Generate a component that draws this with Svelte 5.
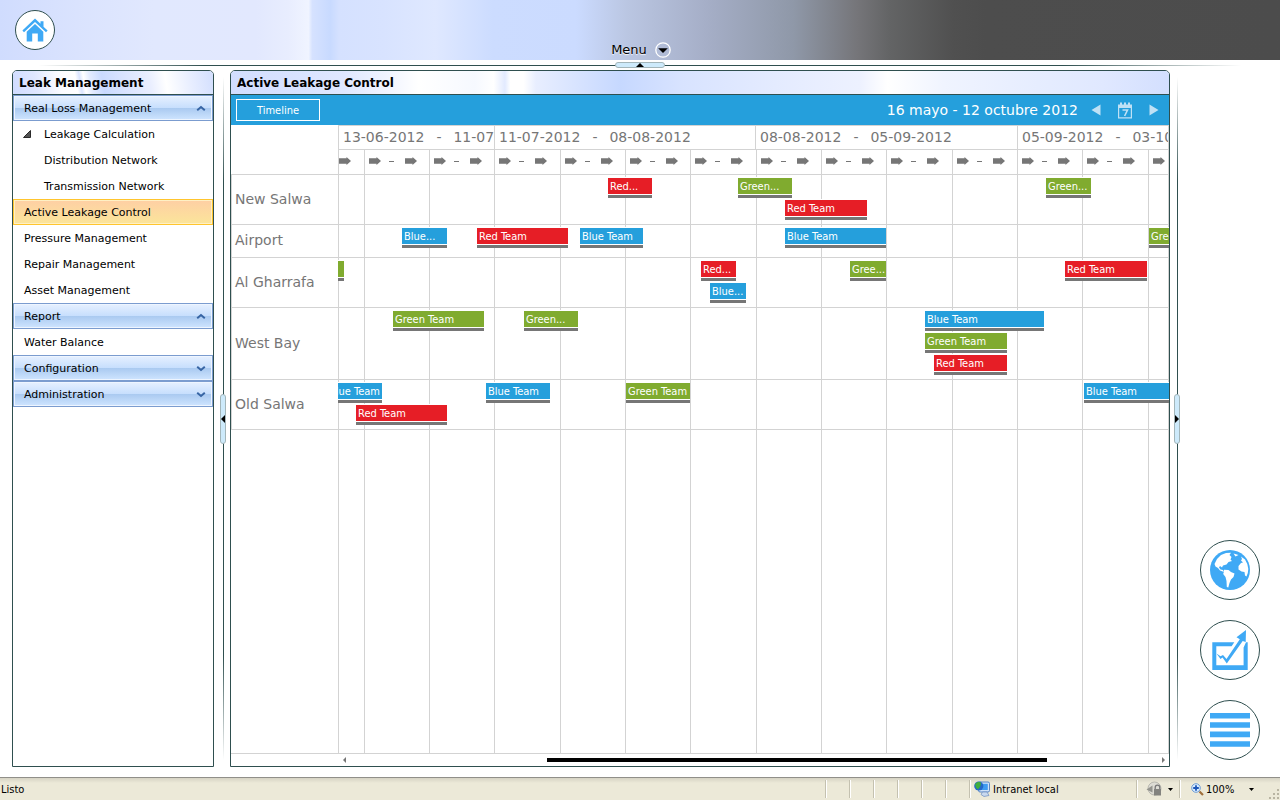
<script>
  const TRACK = 831;
  const pct = (v) => `${(v / TRACK) * 100}%`;
  const columns = (list) => list.map((v) => `minmax(0, ${v}fr)`).join(' ');

  const menu = [
    { label: 'Real Loss Management', kind: 'group', open: true },
    { label: 'Leakage Calculation', kind: 'parent' },
    { label: 'Distribution Network', kind: 'child' },
    { label: 'Transmission Network', kind: 'child' },
    { label: 'Active Leakage Control', kind: 'item', active: true },
    { label: 'Pressure Management', kind: 'item' },
    { label: 'Repair Management', kind: 'item' },
    { label: 'Asset Management', kind: 'item' },
    { label: 'Report', kind: 'group', open: true },
    { label: 'Water Balance', kind: 'item' },
    { label: 'Configuration', kind: 'group', open: false },
    { label: 'Administration', kind: 'group', open: false }
  ];

  const months = [
    { from: '13-06-2012', to: '11-07-2012', span: 156 },
    { from: '11-07-2012', to: '08-08-2012', span: 261 },
    { from: '08-08-2012', to: '05-09-2012', span: 262 },
    { from: '05-09-2012', to: '03-10-2012', span: 152 }
  ];
  const weeks = [26, 65, 65, 66, 65, 65, 66, 65, 65, 66, 65, 65, 66, 21];

  // Each lane lists its bars as [team, label, start, end].
  const rows = [
    { name: 'New Salwa', lanes: [
      [['red', 'Red...', 270, 314], ['green', 'Green...', 400, 454], ['green', 'Green...', 708, 753]],
      [['red', 'Red Team', 447, 529]]
    ] },
    { name: 'Airport', lanes: [
      [['blue', 'Blue...', 64, 109], ['red', 'Red Team', 139, 230], ['blue', 'Blue Team', 242, 305],
       ['blue', 'Blue Team', 447, 548], ['green', 'Green Team', 811, 880]]
    ] },
    { name: 'Al Gharrafa', lanes: [
      [['green', '', -20, 6], ['red', 'Red...', 363, 398], ['green', 'Gree...', 512, 548], ['red', 'Red Team', 727, 809]],
      [['blue', 'Blue...', 372, 408]]
    ] },
    { name: 'West Bay', lanes: [
      [['green', 'Green Team', 55, 146], ['green', 'Green...', 186, 240], ['blue', 'Blue Team', 587, 706]],
      [['green', 'Green Team', 587, 669]],
      [['red', 'Red Team', 596, 669]]
    ] },
    { name: 'Old Salwa', lanes: [
      [['blue', 'Blue Team', -11, 44], ['blue', 'Blue Team', 148, 212], ['green', 'Green Team', 288, 352], ['blue', 'Blue Team', 746, 860]],
      [['red', 'Red Team', 18, 109]]
    ] }
  ];
</script>

{#snippet arrow()}
  <svg class="arrow" width="12" height="8" viewBox="0 0 12 8" aria-hidden="true"><path d="M0 1.3H7.5V0L12 4L7.5 8V6.7H0Z" /></svg>
{/snippet}

<div class="app">
  <header class="banner">
    <button class="round home" aria-label="Home">
      <svg width="26" height="24" viewBox="0 0 26 24" aria-hidden="true">
        <path d="M13 0.5L18.5 5.8V3.2H21.5V8.7L25.6 12.6L24 14.3L13 3.9L2 14.3L0.4 12.6Z" />
        <path d="M13 6L21.3 13.8V23.5H15.8V15.5H10.2V23.5H4.7V13.8Z" />
      </svg>
    </button>
    <button class="menu">
      Menu
      <svg width="16" height="16" viewBox="0 0 16 16" aria-hidden="true">
        <circle cx="8" cy="8" r="7.2" fill="none" stroke="#fff" stroke-width="1.3" />
        <path d="M3.2 6.2H12.8L8 11Z" fill="#000" />
      </svg>
    </button>
  </header>

  <div class="divider">
    <button class="handle wide" aria-label="Collapse header">
      <svg width="8" height="4" viewBox="0 0 8 4" aria-hidden="true"><path d="M0 4L4 0L8 4Z" /></svg>
    </button>
  </div>

  <div class="work">
    <nav class="panel side" aria-label="Leak Management">
      <h2 class="title small-title">Leak Management</h2>
      <ul>
        {#each menu as m}
          <li>
            <button class="entry {m.kind}" class:active={m.active}>
              {#if m.kind === 'parent'}
                <svg class="twist" width="8" height="8" viewBox="0 0 8 8" aria-hidden="true"><path d="M7.5 0.5V7.5H0.5Z" fill="#555" stroke="#2a2a2a" /></svg>
              {/if}
              <span>{m.label}</span>
              {#if m.kind === 'group'}
                <svg class:down={!m.open} width="10" height="7" viewBox="0 0 10 7" aria-hidden="true"><path d="M1.2 5.2L5 2L8.8 5.2" fill="none" stroke="#3765a4" stroke-width="2" /></svg>
              {/if}
            </button>
          </li>
        {/each}
      </ul>
    </nav>

    <div class="splitter left">
      <button class="handle" aria-label="Collapse navigation">
        <svg width="4" height="8" viewBox="0 0 4 8" aria-hidden="true"><path d="M4 0L0 4L4 8Z" /></svg>
      </button>
    </div>

    <main class="panel">
      <h1 class="title">Active Leakage Control</h1>
      <div class="toolbar">
        <button class="view">Timeline</button>
        <span class="range">16 mayo - 12 octubre 2012</span>
        <button class="tool" aria-label="Previous"><svg width="10" height="12" viewBox="0 0 10 12"><path d="M9.5 0.5V11.5L0.5 6Z" /></svg></button>
        <button class="tool cal" aria-label="Pick date">
          <svg width="16" height="17" viewBox="0 0 16 17">
            <path fill-rule="evenodd" d="M1 2.5H3V0.5H5V2.5H7V0.5H9V2.5H11V0.5H13V2.5H15V16.5H1ZM2.2 6V15.3H13.8V6Z" />
            <path d="M5.5 8H10.5L7.6 14" fill="none" stroke="#bfe1f5" stroke-width="1.6" />
          </svg>
        </button>
        <button class="tool" aria-label="Next"><svg width="10" height="12" viewBox="0 0 10 12"><path d="M0.5 0.5V11.5L9.5 6Z" /></svg></button>
      </div>

      <div class="chart">
        <div class="scale">
          <div class="corner"></div>
          <div class="heads">
            <div class="months" style:grid-template-columns={columns(months.map((m) => m.span))}>
              {#each months as m}
                <div class="month"><span>{m.from}</span><span>-</span><span>{m.to}</span></div>
              {/each}
            </div>
            <div class="weeks" style:grid-template-columns={columns(weeks)}>
              {#each weeks as w, i}
                <div class="week" class:first={i === 0}>
                  {@render arrow()}<i></i>{@render arrow()}
                </div>
              {/each}
            </div>
          </div>
        </div>

        <div class="body">
          <div class="lines" aria-hidden="true" style:grid-template-columns={columns(weeks)}>
            {#each weeks as w}<div></div>{/each}
          </div>
          {#each rows as r}
            <section class="row" aria-label={r.name}>
              <div class="name">{r.name}</div>
              <div class="lanes">
                {#each r.lanes as lane}
                  <div class="lane">
                    {#each lane as [team, label, start, end]}
                      <div class="bar {team}" style:left={pct(start)} style:width={pct(end - start)}>{label}</div>
                    {/each}
                  </div>
                {/each}
              </div>
            </section>
          {/each}
        </div>

        <div class="scroll">
          <div class="rail">
            <svg width="3" height="6" viewBox="0 0 3 6" aria-hidden="true"><path d="M3 0V6L0 3Z" /></svg>
            <div class="groove"><div class="thumb"></div></div>
            <svg width="3" height="6" viewBox="0 0 3 6" aria-hidden="true"><path d="M0 0V6L3 3Z" /></svg>
          </div>
        </div>
      </div>
    </main>

    <div class="splitter">
      <button class="handle" aria-label="Collapse tools">
        <svg width="4" height="8" viewBox="0 0 4 8" aria-hidden="true"><path d="M0 0L4 4L0 8Z" /></svg>
      </button>
    </div>

    <aside class="tools">
      <button class="round big" aria-label="Map">
        <svg width="40" height="40" viewBox="0 0 40 40" aria-hidden="true">
          <circle cx="20" cy="20" r="20" />
          <path fill="#fff" d="M4.5 14L7 9L11 5L16 3L21 2.800L19.500 5L21.500 7L20.500 9.500L22 11L18.500 12L16.500 14.500L13 15.500L12 17.500L10 16L9 17.500L10.500 19.500L13 20L14 22L10 20.500L8 18L5.500 16.500Z" />
          <path fill="#fff" d="M14 19.700L18.500 20L21 22L24.500 23.500L23.500 27L21 29.500L19.500 33L18.300 37.500L16.800 37L16.500 31L15.500 27L13.200 24L14 21.500Z" />
          <path fill="#fff" d="M23.500 3.500L28.500 5L25.500 6.500Z" />
          <path fill="#fff" d="M31 6.500L35 9.500L37.300 14L38.300 19L37.800 23L36.500 26.500L35 25.500L34.500 22L31.500 21.500L28.500 19.500L28.500 16L31 13L33 12.500L31 10.500L32 9Z" />
        </svg>
      </button>
      <button class="round big" aria-label="Report">
        <svg width="40" height="40" viewBox="0 0 40 40" aria-hidden="true">
          <path d="M2.300 12.300H24.300L21.600 16.200H6.300V35.300H33.600V17.500L36 12.300H37.700V40H2.300Z" />
          <path d="M6.500 23.500L10.500 26.300L13 25L16.500 29L29.800 9.300L26.500 7.300L36 0L35.700 12L32.700 11L16.800 33.500L12.500 27.500L10.500 29Z" />
        </svg>
      </button>
      <button class="round big" aria-label="List">
        <svg width="40" height="40" viewBox="0 0 40 40" aria-hidden="true">
          <path d="M0 3H40V8.600H0ZM0 12.200H40V17.800H0ZM0 21.600H40V27.200H0ZM0 31.200H40V36.800H0Z" />
        </svg>
      </button>
    </aside>
  </div>

  <footer class="status">
    <span class="ready">Listo</span>
    {#each Array(6) as _}<span class="slot"></span>{/each}
    <span class="zone">
      <svg width="16" height="16" viewBox="0 0 16 16" aria-hidden="true">
        <rect x="4.500" y="1" width="11" height="10" rx="1.500" fill="#cfe2f8" stroke="#5a86c4" />
        <rect x="6.300" y="2.800" width="7.500" height="6.200" fill="#3f9bf0" />
        <path d="M8.500 11L13 11L15 14.500L10 15.500L7 13.500Z" fill="#c9d9ee" stroke="#6a8cc0" stroke-width="0.700" />
        <circle cx="4.800" cy="5" r="4.600" fill="#2468c8" />
        <path d="M1 3L4 0.800L7 1.500L6.500 5L4 8.500L2 6.500Z" fill="#3fae3f" />
      </svg>
      Intranet local
    </span>
    <button class="secure" aria-label="Protected mode">
      <svg width="16" height="16" viewBox="0 0 16 16" aria-hidden="true">
        <circle cx="8.500" cy="7.500" r="6.500" fill="#dddcd4" stroke="#b9b8b0" />
        <path d="M0.500 8.500L6.500 4.500V11.500Z" fill="#94948e" />
        <path d="M9.200 8V6.500A2.300 2.300 0 0 1 13.800 6.500V8" fill="none" stroke="#777" stroke-width="1.300" />
        <rect x="8" y="8" width="7" height="6.500" fill="#83837f" />
      </svg>
      <svg class="caret" width="5" height="3" viewBox="0 0 5 3" aria-hidden="true"><path d="M0 0H5L2.500 3Z" /></svg>
    </button>
    <button class="zoom">
      <svg width="13" height="13" viewBox="0 0 13 13" aria-hidden="true">
        <path d="M8.500 8.500L12 12" stroke="#a0703c" stroke-width="2.200" />
        <circle cx="5" cy="5" r="4.300" fill="#d8ecff" stroke="#6f9cd4" />
        <path d="M5 2.200V7.800M2.200 5H7.800" stroke="#1c56b8" stroke-width="1.800" />
      </svg>
      <span>100%</span>
      <svg class="caret" width="5" height="3" viewBox="0 0 5 3" aria-hidden="true"><path d="M0 0H5L2.500 3Z" /></svg>
    </button>
    <span class="grip">
      <svg width="12" height="12" viewBox="0 0 12 12" aria-hidden="true"><path fill="#b8b4a2" d="M9 1h2v2H9zM5 5h2v2H5zM9 5h2v2H9zM1 9h2v2H1zM5 9h2v2H5zM9 9h2v2H9z" /></svg>
    </span>
  </footer>
</div>

<style>
  :global(body) { margin: 0; background: #fff; }
  * { box-sizing: border-box; }
  .app {
    min-height: 100vh;
    display: flex;
    flex-direction: column;
    font-family: Verdana, "DejaVu Sans", sans-serif;
    font-size: 11px;
    color: #000;
  }
  button { font: inherit; color: inherit; background: none; border: 0; padding: 0; margin: 0; cursor: pointer; }
  svg { display: block; flex: none; }
  h1, h2, ul { margin: 0; padding: 0; list-style: none; }

  .banner {
    height: 60px;
    flex: none;
    display: grid;
    grid-template-columns: 1fr auto 1fr;
    align-items: center;
    padding: 0 15px;
    background: linear-gradient(90deg, #d0dcfe 0, #dae3fe 6%, #e1e8fe 12%, #e2e8fe 20%, #e8edfe 22.500%, #f0f4ff 24.100%, #d6e2ff 24.400%, #c8daff 25.800%, #d5e1ff 26.500%, #d8e3ff 30%, #dfe8ff 34%, #ccdcff 38.500%, #cbdbff 45%, #bac6e2 49%, #a6afc8 55%, #8f98a8 62%, #757579 67%, #636465 69.500%, #505050 74.500%, #4d4d4d 77%, #4c4c4c 100%);
  }
  .round {
    display: flex;
    align-items: center;
    justify-content: center;
    border: 1px solid #2f4f4f;
    border-radius: 50%;
    background: #fff;
    fill: #3fa9f5;
  }
  .home { width: 40px; height: 40px; }
  .menu {
    display: flex;
    align-items: center;
    align-self: end;
    gap: 8px;
    padding: 0 0 2px 2px;
    font-size: 13px;
    line-height: 16px;
    text-shadow: 0 1px 1px #fff;
  }

  .divider {
    height: 10px;
    flex: none;
    display: flex;
    justify-content: center;
    align-items: center;
    background: linear-gradient(90deg, transparent 3%, #2f4f4f 16%, #2f4f4f 83%, transparent 97%) 0 5px / 100% 1px no-repeat;
  }
  .handle {
    display: flex;
    align-items: center;
    justify-content: center;
    width: 6px;
    height: 50px;
    background: #cdeafb;
    border: 1px solid #a3b5b9;
    border-radius: 3px;
  }
  .handle.wide { width: 50px; height: 6px; }

  .work {
    flex: 1;
    display: grid;
    grid-template-columns: 202px 16px minmax(0, 1fr) 14px 96px;
    padding: 0 0 10px 12px;
  }
  .splitter {
    display: flex;
    align-items: center;
    justify-content: center;
    background: linear-gradient(transparent 1%, #2f4f4f 16%, #2f4f4f 84%, transparent 99%) center / 1px 100% no-repeat;
  }
  .splitter.left { margin-left: 2px; }
  .panel {
    display: flex;
    flex-direction: column;
    min-width: 0;
    border: 1px solid #2f4f4f;
    border-radius: 5px 5px 0 0;
    overflow: hidden;
  }
  .title {
    flex: none;
    height: 24px;
    padding-left: 6px;
    line-height: 24px;
    font-size: 12px;
    font-weight: bold;
    border-bottom: 1px solid #2f4f4f;
    background: linear-gradient(90deg, #d3deff 0, #d8e2ff 7%, #dfe7ff 12%, #f2f5ff 17%, #fff 20%, #f6f9ff 26%, #fff 28%, #e2eaff 29.200%, #fff 29.800%, #fff 31.200%, #e8eeff 32.500%, #c6d8ff 41.500%, #d8e3ff 48%, #e4ebff 58%, #edf1ff 67%, #fff 70%, #f0f4ff 76%, #e6edff 86%, #e0e8ff 93%, #d3dffe 100%);
  }
  .small-title {
    background: linear-gradient(80deg, #d0dcff 0, #dfe7ff 12%, #fbfcff 24%, #fff 32%, #dbe5ff 34%, #fff 36%, #e4ecff 39%, #c9daff 45%, #d8e3ff 55%, #e9eeff 68%, #fff 76%, #e8eeff 88%, #d3dffe 100%);
  }

  .entry {
    display: flex;
    align-items: center;
    width: 100%;
    height: 26px;
    padding: 0 6px 0 10px;
    border: 1px solid transparent;
    text-align: left;
  }
  .entry span { flex: 1; }
  .entry.child { padding-left: 30px; }
  .entry.parent { padding-left: 9px; }
  .twist { margin-right: 13px; }
  .entry.group {
    border-color: #7b9ccf;
    box-shadow: inset 0 0 0 1px #eef5ff;
    background: linear-gradient(#e6f0ff 0, #c8dffd 48%, #a9c9f0 50%, #cfe5ff 100%);
  }
  .entry.active {
    border-color: #ffc52e;
    box-shadow: inset 0 0 0 1px #fff0c4;
    background: linear-gradient(#fecfa4, #fbe59a);
  }
  .down { transform: rotate(180deg); }

  .toolbar {
    flex: none;
    display: flex;
    align-items: center;
    height: 30px;
    padding: 0 10px 0 5px;
    background: #259fdc;
    color: #fff;
  }
  .view { width: 84px; height: 22px; border: 1px solid #fff; font-family: Tahoma, "DejaVu Sans Condensed", "DejaVu Sans", sans-serif; }
  .range { margin-left: auto; margin-right: 13px; font-size: 14px; }
  .tool { fill: #bfe1f5; }
  .cal { margin: 0 16px; }

  .chart { flex: 1; display: flex; flex-direction: column; color: #767676; }
  .scale, .row { display: grid; grid-template-columns: 107px minmax(0, 1fr); }
  .heads { border-top: 1px solid #d3d3d3; }
  .months, .weeks, .lines { display: grid; }
  .month {
    height: 24px;
    display: flex;
    gap: 12px;
    padding-left: 4px;
    overflow: hidden;
    white-space: nowrap;
    font-size: 14px;
    line-height: 22px;
    border-left: 1px solid #d3d3d3;
    border-bottom: 1px solid #d3d3d3;
  }
  .week {
    height: 24px;
    display: flex;
    align-items: center;
    padding: 0 0 2px 4px;
    overflow: hidden;
    border-left: 1px solid #d3d3d3;
  }
  .month:last-child, .week:last-child { border-right: 1px solid #d3d3d3; }
  .week.first { justify-content: flex-end; padding: 0 13px 2px 0; }
  .week i { flex: none; width: 5px; height: 1px; margin: 0 11px 0 8px; background: #767676; }
  .arrow { fill: #767676; }

  .body { flex: 1; position: relative; border-top: 1px solid #d3d3d3; border-bottom: 1px solid #d3d3d3; }
  .lines { position: absolute; inset: 0 0 0 107px; }
  .lines div { border-left: 1px solid #d3d3d3; }
  .lines div:last-child { border-right: 1px solid #d3d3d3; }
  .row { position: relative; min-height: 33px; border-bottom: 1px solid #d3d3d3; border-left: 1px solid #d3d3d3; }
  .row { grid-template-columns: 106px minmax(0, 1fr); }
  .name { align-self: center; padding: 0 0 2px 3px; font-size: 14px; }
  .lanes { padding: 3px 0 2px; overflow: hidden; }
  .lane { position: relative; height: 22px; }
  .bar {
    position: absolute;
    height: 20px;
    padding-left: 2px;
    overflow: hidden;
    white-space: nowrap;
    line-height: 17px;
    color: #fff;
    font-family: Tahoma, "DejaVu Sans Condensed", "DejaVu Sans", sans-serif;
    border-bottom: 3px solid #767676;
    box-shadow: 0 -1px #fff;
  }
  .red { background: linear-gradient(#e61e26 16px, #fff 16px); }
  .green { background: linear-gradient(#80ab2f 16px, #fff 16px); }
  .blue { background: linear-gradient(#259fdc 16px, #fff 16px); }

  .scroll { flex: none; height: 12px; padding-left: 107px; }
  .rail { display: flex; align-items: center; height: 12px; padding: 0 4px 0 5px; gap: 3px; fill: #767676; }
  .groove { flex: 1; display: grid; grid-template-columns: 199fr 502fr 112fr; }
  .thumb { grid-column: 2; height: 4px; background: #000; }

  .tools { display: flex; flex-direction: column; justify-content: flex-end; gap: 20px; padding: 0 0 7px 16px; }
  .big { width: 60px; height: 60px; }

  .status {
    flex: none;
    display: flex;
    align-items: center;
    height: 23px;
    border-top: 1px solid #908f89;
    background: linear-gradient(#d6d3c4 0, #ece9d8 5px);
    font-family: Tahoma, "DejaVu Sans Condensed", "DejaVu Sans", sans-serif;
    font-size: 11px;
  }
  .status > * { height: 18px; display: flex; align-items: center; }
  .ready { flex: 1; padding-left: 1px; }
  .slot, .zone, .secure, .zoom { border-left: 1px solid #c4c1b0; box-shadow: inset 1px 0 #fff; }
  .slot { width: 24px; }
  .zone { width: 167px; padding-left: 4px; gap: 3px; }
  .secure { width: 43px; padding-left: 9px; gap: 6px; }
  .zoom { width: 84px; padding-left: 11px; gap: 2px; }
  .zoom .caret { margin-left: 13px; }
  .grip { width: 17px; align-self: end; align-items: end; justify-content: flex-end; }
</style>
